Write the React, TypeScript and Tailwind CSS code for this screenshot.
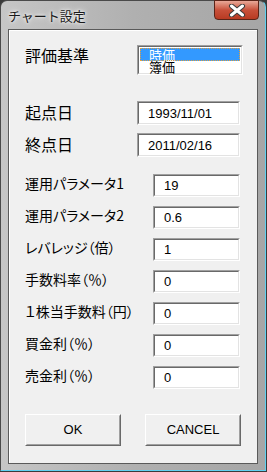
import React from 'react';

const jp = '[font-family:"Noto_Sans_CJK_JP",sans-serif]';
const palt = '[font-feature-settings:"palt"]';
const num = '[font-family:"Liberation_Sans",Arial,sans-serif]';

// 凹んだ入力欄（クラシックな3D枠）
function Field({ value, width }: { value: string; width: string }) {
  return (
    <div
      className={`${width} h-full border border-t-[#a0a0a0] border-l-[#a0a0a0] border-b-white border-r-white`}
    >
      <div className="h-full border border-t-[#696969] border-l-[#696969] border-b-[#e3e3e3] border-r-[#e3e3e3] bg-white flex items-center pl-[9px]">
        <span className={`${num} text-[13px] text-black leading-none`}>{value}</span>
      </div>
    </div>
  );
}

function Row({
  label,
  value,
  large,
  className,
}: {
  label: string;
  value: string;
  large?: boolean;
  className: string;
}) {
  return (
    <div className={`flex items-start ${className}`}>
      <div
        className={`${jp} ${palt} ${large ? 'text-[16px] w-[112px] pt-[1px]' : 'text-[14px] w-[128px] -mt-[1px]'} text-black leading-[20px] whitespace-nowrap`}
      >
        {label}
      </div>
      <Field value={value} width={large ? 'w-[103px]' : 'w-[87px]'} />
    </div>
  );
}

function Button({ children }: { children: React.ReactNode }) {
  return (
    <button className="w-[96px] h-[32px] border border-t-white border-l-white border-b-[#696969] border-r-[#696969] bg-[#f0f0f0]">
      <div className="h-full border border-t-[#f0f0f0] border-l-[#f0f0f0] border-b-[#a0a0a0] border-r-[#a0a0a0] flex items-center justify-center">
        <span className={`${num} text-[13px] text-black`}>{children}</span>
      </div>
    </button>
  );
}

export default function App() {
  const params: [string, string][] = [
    ['運用パラメータ1', '19'],
    ['運用パラメータ2', '0.6'],
    ['レバレッジ（倍）', '1'],
    ['手数料率（％）', '0'],
    ['１株当手数料（円）', '0'],
    ['買金利（％）', '0'],
    ['売金利（％）', '0'],
  ];

  return (
    <div className="w-[267px] h-[472px] overflow-hidden bg-[#3a3a3a]">
      <div className="w-[266px] h-[471px] rounded-t-[7px] border border-[#4a4a4a] border-b-[#5fd0f0] border-r-[#5fd0f0] bg-gradient-to-r from-[#c6c6c6] via-[#b0b0b0] to-[#a6a6a6] flex flex-col">
        {/* タイトルバー */}
        <div className="h-[28px] shrink-0 flex items-start relative">
          <span
            className={`${jp} text-[13px] text-[#1a1a1a] mt-[5px] ml-[7px] [text-shadow:0_0_6px_#ffffff,0_0_3px_#ffffff]`}
          >
            チャート設定
          </span>
          <div className="absolute right-[6px] top-[-1px] w-[45px] h-[20px] rounded-b-[4px] border border-[#5a2418] bg-gradient-to-b from-[#e8a898] via-[#c8503a] to-[#b83a22] flex items-center justify-center">
            <svg width="18" height="13" viewBox="0 0 18 13">
              <path
                d="M3.5 2 L14.5 11 M14.5 2 L3.5 11"
                stroke="#3a3a3a"
                strokeWidth="5"
                strokeLinecap="round"
              />
              <path
                d="M3.5 2 L14.5 11 M14.5 2 L3.5 11"
                stroke="#ffffff"
                strokeWidth="3"
                strokeLinecap="round"
              />
            </svg>
          </div>
        </div>

        {/* クライアント領域 */}
        <div className="mx-[7px] h-[435px] border border-[#5a5a5a] bg-[#f0f0f0]">
          <div className="h-full border-t border-l border-[#ffffff] pl-[15px] flex flex-col">
            {/* 評価基準 */}
            <div className="flex items-start mt-[14px] h-[30px]">
              <div className={`${jp} text-[16px] w-[112px] text-black leading-[20px]`}>評価基準</div>
              <div className="w-[106px] h-[30px] border border-t-[#a0a0a0] border-l-[#a0a0a0] border-b-white border-r-white">
                <div className="h-full border border-t-[#696969] border-l-[#696969] border-b-[#e3e3e3] border-r-[#e3e3e3] bg-white flex flex-col">
                  <div className="h-[13px] shrink-0 mx-[1px] mt-[1px] bg-[#3399ff] outline-1 outline-dotted outline-[#e0a040] -outline-offset-1 flex items-center pl-[9px]">
                    <span className={`${jp} text-[13px] leading-[13px] text-white`}>時価</span>
                  </div>
                  <div className="h-[12px] shrink-0 flex items-center pl-[10px]">
                    <span className={`${jp} text-[13px] leading-[12px] text-black`}>簿価</span>
                  </div>
                </div>
              </div>
            </div>

            <Row label="起点日" value="1993/11/01" large className="mt-[26px] h-[24px]" />
            <Row label="終点日" value="2011/02/16" large className="mt-[8px] h-[24px]" />

            {params.map(([label, value], i) => (
              <Row
                key={label}
                label={label}
                value={value}
                className={`${i === 0 ? 'mt-[17px]' : 'mt-[9px]'} h-[23px]`}
              />
            ))}

            <div className="flex gap-[24px] mt-[25px]">
              <Button>OK</Button>
              <Button>CANCEL</Button>
            </div>
          </div>
        </div>
      </div>
    </div>
  );
}
